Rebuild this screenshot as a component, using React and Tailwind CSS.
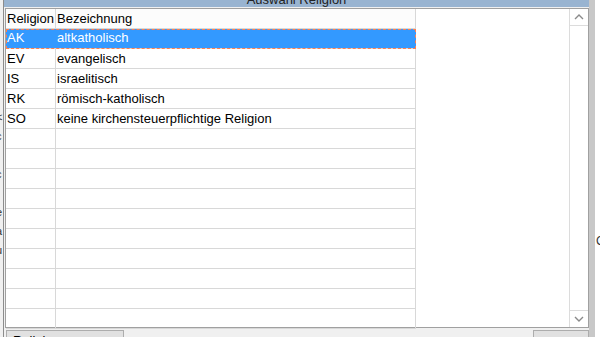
const rows = [
  { code: 'AK', name: 'altkatholisch' },
  { code: 'EV', name: 'evangelisch' },
  { code: 'IS', name: 'israelitisch' },
  { code: 'RK', name: 'römisch-katholisch' },
  { code: 'SO', name: 'keine kirchensteuerpflichtige Religion' },
  null, null, null, null, null, null, null, null, null, null,
];

const ChevronUp = () => (
  <svg width="10" height="6" viewBox="0 0 10 6" fill="none">
    <path d="M1 5 L5 1 L9 5" stroke="#8a8a8a" strokeWidth="1.4" />
  </svg>
);

const ChevronDown = () => (
  <svg width="10" height="6" viewBox="0 0 10 6" fill="none">
    <path d="M1 1 L5 5 L9 1" stroke="#8a8a8a" strokeWidth="1.4" />
  </svg>
);

export default function App() {
  return (
    <div
      className="relative flex h-[337px] w-[600px] overflow-hidden bg-white text-[13px] text-black"
      style={{ fontFamily: '"Liberation Sans", Arial, sans-serif' }}
    >
      {/* background window edge on the left */}
      <div className="flex w-[3px] shrink-0 flex-col overflow-hidden bg-[#f0f0f0] pt-[108px] text-[11px] leading-[19px] text-[#333]">
        <span className="-ml-[4px]">&lt;</span>
        <span className="-ml-[4px]">c</span>
        <span className="-ml-[4px]">l</span>
        <span className="-ml-[4px]">c</span>
        <span className="-ml-[4px]">l</span>
        <span className="-ml-[4px]">e</span>
        <span className="-ml-[4px]">a</span>
        <span className="-ml-[4px]">u</span>
      </div>

      {/* dialog window */}
      <div className="flex w-[592px] shrink-0 flex-col overflow-hidden border-l border-r-[6px] border-l-[#8c8c8c] border-r-[#c8c8c8] bg-[#f0f0f0]">
        <div className="flex h-[7px] shrink-0 items-start justify-center overflow-hidden bg-[#99b4d1]">
          <span className="-mt-[7px] shrink-0 text-[13px] leading-[14px] text-[#222]">Auswahl Religion</span>
        </div>

        <div className="ml-px mt-px flex h-[320px] shrink-0 border border-[#a0a0a0] bg-white">
          <div className="flex w-[410px] flex-col">
            <div className="flex h-[20px] shrink-0 border-b border-[#d8d8d8] bg-[#fcfcfc] leading-[19px]">
              <div className="w-[50px] border-r border-[#d8d8d8] pl-[1px]">Religion</div>
              <div className="flex-1 border-r border-[#d8d8d8] pl-[1px]">Bezeichnung</div>
            </div>
            {rows.map((row, i) =>
              i === 0 ? (
                <div
                  key={i}
                  className="flex h-[20px] shrink-0 border-b border-[#d8d8d8] bg-[#3399ff] leading-[18px] text-white outline-1 -outline-offset-1 outline-dashed outline-[#ff7f50]"
                >
                  <div className="w-[50px] border-r border-[#3399ff] pl-[1px]">{row.code}</div>
                  <div className="flex-1 pl-[1px]">{row.name}</div>
                </div>
              ) : (
                <div key={i} className="flex h-[20px] shrink-0 border-b border-[#d8d8d8] leading-[19px]">
                  <div className="w-[50px] border-r border-[#d8d8d8] pl-[1px]">{row ? row.code : ''}</div>
                  <div className="flex-1 border-r border-[#d8d8d8] pl-[1px]">{row ? row.name : ''}</div>
                </div>
              )
            )}
          </div>
          <div className="flex-1" />
          <div className="flex w-[19px] flex-col border-l border-[#dcdcdc] bg-white">
            <div className="flex h-[17px] items-center justify-center border-b border-[#dcdcdc]">
              <ChevronUp />
            </div>
            <div className="flex-1" />
            <div className="flex h-[17px] items-center justify-center border-t border-[#dcdcdc]">
              <ChevronDown />
            </div>
          </div>
        </div>

        <div className="flex h-[30px] shrink-0 items-start justify-between pl-[2px] pr-0 pt-[2px]">
          <button className="h-[24px] w-[118px] border border-[#adadad] bg-[#e1e1e1] pl-[6px] pt-[3px] text-left leading-[14px]">
            Religion auswählen
          </button>
          <button className="h-[24px] w-[56px] border border-[#adadad] bg-[#e1e1e1] pt-[3px] leading-[14px]">
            Wählen
          </button>
        </div>
      </div>

      {/* background window edge on the right */}
      <div className="flex flex-1 flex-col bg-white pl-[1px] pt-[232px] text-[12px] text-[#333]">
        <span>C</span>
      </div>
    </div>
  );
}
